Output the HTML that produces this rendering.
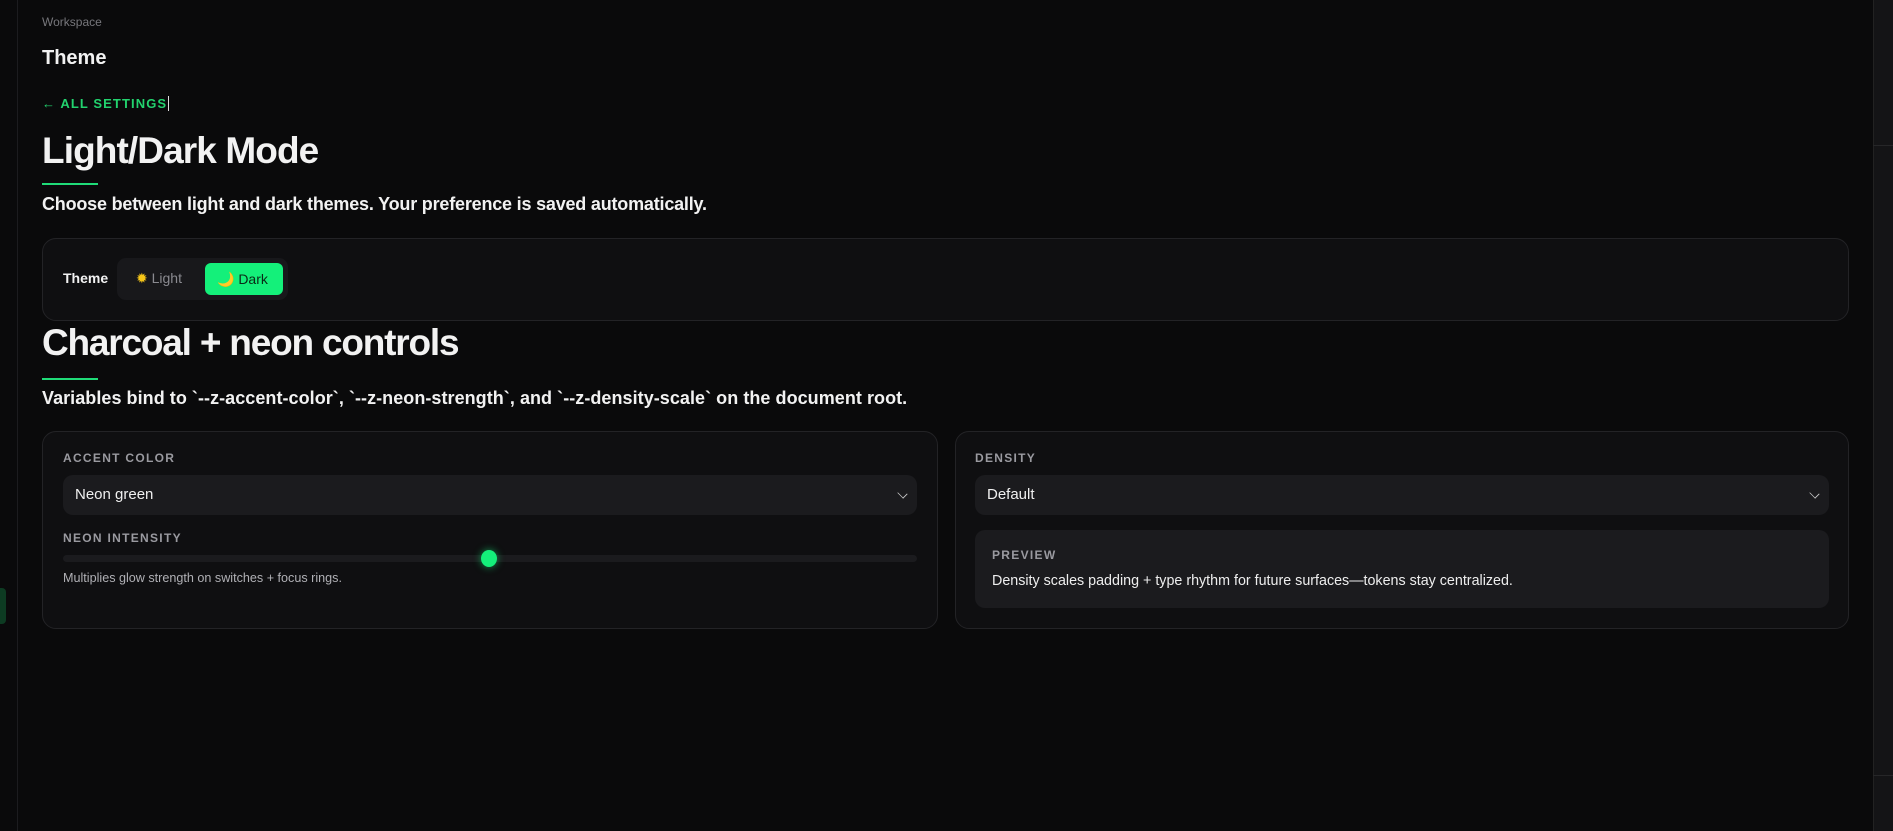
<!DOCTYPE html>
<html><head><meta charset="utf-8"><style>
*{margin:0;padding:0;box-sizing:border-box}
body{width:1893px;height:831px;background:#0a0a0b;font-family:"Liberation Sans",sans-serif;color:#f2f2f2;position:relative;overflow:hidden}
.a{position:absolute;white-space:nowrap}
.card{position:absolute;background:#0f0f11;border:1px solid #232326;border-radius:14px}
.lbl{position:absolute;font-size:12px;font-weight:700;letter-spacing:1.3px;color:#9a9aa0}
.sel{position:absolute;background:#1b1b1e;border-radius:10px;font-size:15px;color:#f0f0f0;padding-left:12px;line-height:39px}
.chev{position:absolute;right:10px;top:14px;width:9px;height:9px;border-right:1.3px solid #ccc;border-bottom:1.3px solid #ccc;transform:rotate(45deg) scale(.9,.7)}
</style></head><body>
<div class="a" style="left:17px;top:0;width:1px;height:831px;background:#1c1c1f"></div>
<div class="a" style="left:0;top:588px;width:6px;height:36px;background:#0d3b22;border-radius:0 4px 4px 0"></div>
<div class="a" style="left:1873px;top:0;width:20px;height:831px;background:#141416;border-left:1px solid #222"></div>
<div class="a" style="left:1873px;top:145px;width:20px;height:1px;background:#262628"></div>
<div class="a" style="left:1873px;top:775px;width:20px;height:1px;background:#262628"></div>

<div class="a" style="left:42px;top:15px;font-size:12px;color:#77777c">Workspace</div>
<div class="a" style="left:42px;top:47px;font-size:20px;font-weight:700">Theme</div>
<div class="a" style="left:42px;top:96px;font-size:13px;font-weight:700;color:#22d36e;letter-spacing:1.1px">← ALL SETTINGS<span style="display:inline-block;width:1px;height:15px;background:#ddd;vertical-align:-3px;margin-left:1px"></span></div>
<div class="a" style="left:42px;top:130px;font-size:37px;font-weight:700;letter-spacing:-0.9px">Light/Dark Mode</div>
<div class="a" style="left:42px;top:183px;width:56px;height:2px;background:#1fdc78"></div>
<div class="a" style="left:42px;top:194px;font-size:18px;font-weight:700;letter-spacing:-0.2px">Choose between light and dark themes. Your preference is saved automatically.</div>

<div class="card" style="left:42px;top:238px;width:1807px;height:83px"></div>
<div class="a" style="left:63px;top:270px;font-size:14px;font-weight:700">Theme</div>
<div class="a" style="left:117px;top:258px;width:171px;height:42px;background:#18181b;border-radius:9px"></div>
<div class="a" style="left:136px;top:270px;font-size:14px;color:#8a8a90"><span style="color:#f5c518">✹</span> Light</div>
<div class="a" style="left:205px;top:263px;width:78px;height:32px;background:#14f07a;border-radius:6px;font-size:14px;line-height:32px;padding-left:12px;color:#0a2a16">🌙 Dark</div>

<div class="a" style="left:42px;top:322px;font-size:37px;font-weight:700;letter-spacing:-1.2px">Charcoal + neon controls</div>
<div class="a" style="left:42px;top:378px;width:56px;height:2px;background:#1fdc78"></div>
<div class="a" style="left:42px;top:388px;font-size:18px;font-weight:700;letter-spacing:0.05px">Variables bind to `--z-accent-color`, `--z-neon-strength`, and `--z-density-scale` on the document root.</div>

<div class="card" style="left:42px;top:431px;width:896px;height:198px"></div>
<div class="lbl" style="left:63px;top:451px">ACCENT COLOR</div>
<div class="sel" style="left:63px;top:475px;width:854px;height:40px">Neon green<div class="chev"></div></div>
<div class="lbl" style="left:63px;top:531px">NEON INTENSITY</div>
<div class="a" style="left:63px;top:555px;width:854px;height:7px;background:#1b1b1e;border-radius:4px"></div>
<div class="a" style="left:481px;top:550px;width:16px;height:17px;background:#14f07a;border-radius:50%;box-shadow:0 0 8px rgba(20,240,122,.6)"></div>
<div class="a" style="left:63px;top:571px;font-size:12.6px;color:#b0b0b5">Multiplies glow strength on switches + focus rings.</div>

<div class="card" style="left:955px;top:431px;width:894px;height:198px"></div>
<div class="lbl" style="left:975px;top:451px">DENSITY</div>
<div class="sel" style="left:975px;top:475px;width:854px;height:40px">Default<div class="chev"></div></div>
<div class="a" style="left:975px;top:530px;width:854px;height:78px;background:#1b1b1e;border-radius:10px"></div>
<div class="lbl" style="left:992px;top:548px">PREVIEW</div>
<div class="a" style="left:992px;top:573px;font-size:14.3px;color:#eee">Density scales padding + type rhythm for future surfaces—tokens stay centralized.</div>
</body></html>
